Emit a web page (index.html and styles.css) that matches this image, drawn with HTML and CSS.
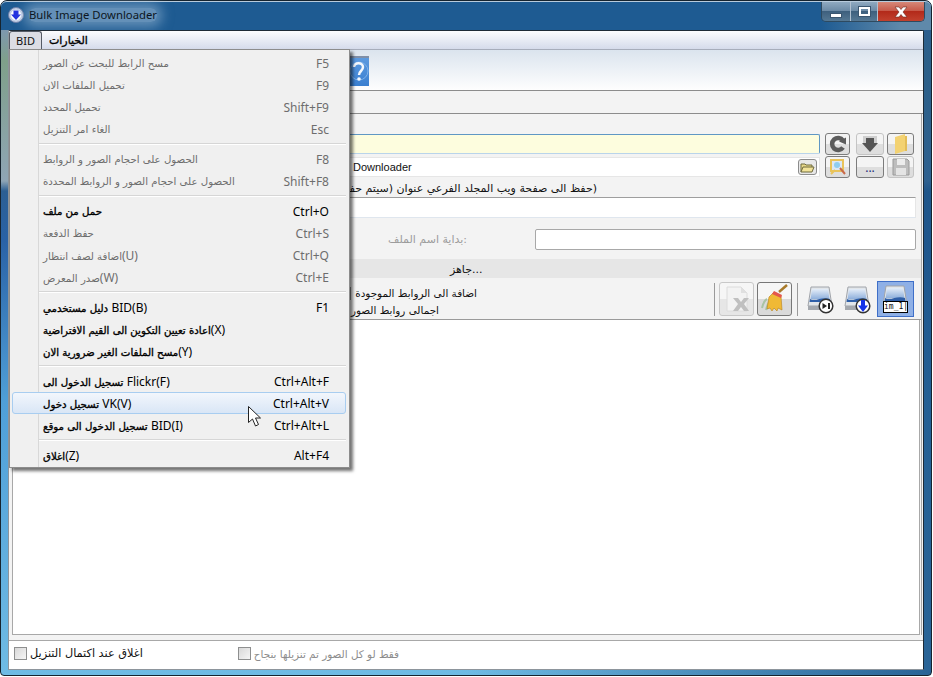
FILE: index.html
```html
<!DOCTYPE html>
<html>
<head>
  <meta charset='utf8'>
  <title>Bulk Image Downloader</title>
  <link rel="stylesheet" href="styles.css">
</head>
<body>
  <div class='window'>
    <div class='titlebar'>
      <svg class='appicon' width='16' height='16' viewBox='0 0 16 16'>
        <circle cx='8' cy='8' r='7.5' fill='#c3cfe6' stroke='#6d7fa8'/>
        <circle cx='8' cy='8' r='5.2' fill='#fff'/>
        <path d='M5.5 3.5h5v4h2.5L8 13 3 7.5h2.5z' fill='#2230e0'/>
      </svg>
      <span class='apptitle'>Bulk Image Downloader</span>
      <div class='caption'>
        <span class='capbtn'><i class='cap-min'></i></span>
        <span class='capbtn narrow'><i class='cap-max'></i></span>
        <span class='capbtn close'>
          <svg width='16' height='12' viewBox='0 0 16 12'><path d='M2 1h4l2 2.500L10 1h4l-4 5 4 5h-4L8 8.500 6 11H2l4-5z' fill='#fff' stroke='#6b2a20' stroke-width='.6'/></svg>
        </span>
      </div>
    </div>

    <div class='client'>
      <div class='menubar'>
        <span class='menutop open'>BID</span>
        <span class='menutop ar'>الخيارات</span>
      </div>

      <div class='toolbar'>
        <svg class='help' width='24' height='30' viewBox='0 0 24 30'>
          <defs>
            <linearGradient id='bookblue' x1='0' y1='0' x2='0' y2='1'>
              <stop offset='0' stop-color='#5f9ce0'/>
              <stop offset='1' stop-color='#3a7fd0'/>
            </linearGradient>
          </defs>
          <rect width='24' height='30' fill='url(#bookblue)'/>
          <rect width='24' height='2' fill='#7f8fa8'/>
          <circle cx='14' cy='15' r='9' fill='none' stroke='#7fb2ea' stroke-width='1'/>
          <path d='M9 11c0-5 9-5 9 0 0 4-4 4-4 8' fill='none' stroke='#f4f8fd' stroke-width='2.500'/>
          <circle cx='14' cy='23' r='1.800' fill='#f4f8fd'/>
        </svg>
      </div>
      <div class='tabs'></div>

      <div class='group'>
        <div class='row first'>
          <div class='input url'></div>
          <div class='btns'>
            <span class='btn b1 hot'>
              <svg width='20' height='18' viewBox='0 0 20 18'><path d='M15 5.500A6 6 0 1 0 15 12.500' fill='none' stroke='#5c5c5c' stroke-width='4.500'/><path d='M11 6.500l7-4v7z' fill='#5c5c5c'/></svg>
            </span>
            <span class='btn b2'>
              <svg width='20' height='18' viewBox='0 0 20 18'><rect x='3' y='1' width='14' height='8' fill='#cfcfcf'/><path d='M6 3h8v5h4l-8 9-8-9h4z' fill='#555'/></svg>
            </span>
            <span class='btn b3 hot'>
              <svg width='16' height='20' viewBox='0 0 16 20'><path d='M2 3l10-3v17L2 20z' fill='#f3d272'/><path d='M12 2h2v15h-2z' fill='#e3bd58'/></svg>
            </span>
          </div>
        </div>
        <div class='row second'>
          <div class='input path'>
            <span class='pathtext'>Downloader</span>
            <span class='browse'>
              <svg width='15' height='11' viewBox='0 0 15 11'><path d='M1 10V2h4l1 1h6v2' fill='#e8d98a' stroke='#6f6a3c'/><path d='M1 10l2-5h11l-2 5z' fill='#f2e39a' stroke='#6f6a3c'/></svg>
            </span>
          </div>
          <div class='btns'>
            <span class='btn b1 hot'>
              <svg width='20' height='18' viewBox='0 0 20 18'><rect x='3' y='2' width='12' height='11' fill='#dce8f5' stroke='#e9c35a' stroke-width='2'/><circle cx='9' cy='7' r='3' fill='#8fcdf0'/><path d='M12 10l5 6' stroke='#c96a4a' stroke-width='2'/><path d='M3 16l4-4' stroke='#e9c35a' stroke-width='2'/></svg>
            </span>
            <span class='btn b2 hot dots'>...</span>
            <span class='btn b3'>
              <svg width='18' height='18' viewBox='0 0 18 18'><path d='M1 1h14l2 2v14H1z' fill='#bdbdbd' stroke='#9a9a9a'/><rect x='5' y='1' width='8' height='6' fill='#ececec'/><rect x='4' y='10' width='10' height='7' fill='#e4e4e4'/></svg>
            </span>
          </div>
        </div>

        <div class='savetext ar' dir='rtl'>(حفظ الى صفحة ويب المجلد الفرعي عنوان (سيتم حف</div>
        <div class='input subdir'></div>
        <div class='prefix'>
          <span class='prefixlabel ar'>بداية اسم الملف:</span>
          <div class='input prefixbox'></div>
        </div>
        <div class='status'><span class='ar'>جاهز...</span></div>

        <div class='tools'>
          <div class='info ar' dir='rtl'>
            <div class='infoline'>اضافة الى الروابط الموجودة<i class='check'></i></div>
            <div class='infoline total'>اجمالى روابط الصور</div>
          </div>
          <i class='sep'></i>
          <span class='tool framed'>
            <svg width='30' height='30' viewBox='0 0 30 30'>
              <path d='M5 3h14l6 6v18H5z' fill='#f3f3f3' stroke='#dcdcdc'/>
              <path d='M19 3v6h6z' fill='#e0e0e0'/>
              <path d='M11 14h5l3 4 3-4h5l-5 6 5 7h-5l-3-4-3 4h-5l5-7z' fill='#c0c0c0'/>
            </svg>
          </span>
          <span class='tool framed dark'>
            <svg width='30' height='30' viewBox='0 0 30 30'>
              <path d='M2 24c1-4 3-8 5-9M6 26c1-4 2-7 4-9' stroke='#a9c4a4' stroke-width='2' fill='none'/>
              <path d='M9 13l5-5 7 4 1 14-4-2-1 3-3-3-2 3-2-3-3 1z' fill='#f0b935' stroke='#b98118' stroke-width='.6'/>
              <path d='M12 10l9 4 1-3-8-4z' fill='#e4574c'/>
              <path d='M19 8l8-7' stroke='#a87a2a' stroke-width='2.500'/>
            </svg>
          </span>
          <i class='sep wide'></i>
          <span class='tool plain'>
            <svg width='30' height='30' viewBox='0 0 30 30'>
              <use href='#disk'/>
              <circle cx='20' cy='22' r='6.800' fill='#fff' stroke='#333' stroke-width='1.500'/>
              <path d='M16.500 19l4.500 3-4.500 3z' fill='#222'/><rect x='22' y='19' width='2' height='6' fill='#222'/>
            </svg>
          </span>
          <span class='tool plain last'>
            <svg width='30' height='30' viewBox='0 0 30 30'>
              <use href='#disk'/>
              <circle cx='20' cy='22' r='6.800' fill='#fff' stroke='#333' stroke-width='1.500'/>
              <path d='M18 16h4v5.500h3L20 28l-5-6.500h3z' fill='#1434e8'/>
            </svg>
          </span>
          <span class='tool selected'>
            <svg width='30' height='30' viewBox='0 0 30 30'><use href='#disk'/></svg>
            <span class='naming'>im_1|</span>
          </span>
        </div>

        <div class='list'></div>
      </div>

      <div class='bottom'>
        <label class='opt ar'><i class='check'></i>اغلاق عند اكتمال التنزيل</label>
        <label class='opt off ar'><i class='check'></i>فقط لو كل الصور تم تنزيلها بنجاح</label>
      </div>
    </div>

    <!-- the open BID menu, over everything else -->
    <div class='menu'>
      <div class='item off'><span class='ar'>مسح الرابط للبحث عن الصور</span><span class='key'>F5</span></div>
      <div class='item off'><span class='ar'>تحميل الملفات الان</span><span class='key'>F9</span></div>
      <div class='item off'><span class='ar'>تحميل المحدد</span><span class='key'>Shift+F9</span></div>
      <div class='item off'><span class='ar'>الغاء امر التنزيل</span><span class='key'>Esc</span></div>
      <hr>
      <div class='item off'><span class='ar'>الحصول على احجام الصور و الروابط</span><span class='key'>F8</span></div>
      <div class='item off'><span class='ar'>الحصول على احجام الصور و الروابط المحددة</span><span class='key'>Shift+F8</span></div>
      <hr>
      <div class='item'><span class='ar'>حمل من ملف</span><span class='key'>Ctrl+O</span></div>
      <div class='item off'><span class='ar'>حفظ الدفعة</span><span class='key'>Ctrl+S</span></div>
      <div class='item off'><span class='ar'>اضافة لصف انتظار<span class='lat'>(U)</span></span><span class='key'>Ctrl+Q</span></div>
      <div class='item off'><span class='ar'>صدر المعرض<span class='lat'>(W)</span></span><span class='key'>Ctrl+E</span></div>
      <hr>
      <div class='item'><span class='ar'>دليل مستخدمي <span class='lat'>BID(B)</span></span><span class='key'>F1</span></div>
      <div class='item'><span class='ar'>اعادة تعيين التكوين الى القيم الافتراضية<span class='lat'>(X)</span></span></div>
      <div class='item'><span class='ar'>مسح الملفات الغير ضرورية الان<span class='lat'>(Y)</span></span></div>
      <hr>
      <div class='item'><span class='ar'>تسجيل الدخول الى <span class='lat'>Flickr(F)</span></span><span class='key'>Ctrl+Alt+F</span></div>
      <div class='item hover'><span class='ar'>تسجيل دخول <span class='lat'>VK(V)</span></span><span class='key'>Ctrl+Alt+V</span></div>
      <div class='item'><span class='ar'>تسجيل الدخول الى موقع <span class='lat'>BID(I)</span></span><span class='key'>Ctrl+Alt+L</span></div>
      <hr>
      <div class='item'><span class='ar'>اغلاق<span class='lat'>(Z)</span></span><span class='key'>Alt+F4</span></div>
    </div>

    <svg class='pointer' width='14' height='21' viewBox='0 0 14 21'>
      <path d='M.5.5v16l4-3.500 3 7 3-1.500-3-6.500h5z' fill='#fff' stroke='#222'/>
    </svg>
  </div>

  <svg width='0' height='0' class='defs'>
    <defs>
      <linearGradient id='diskglass' x1='0' y1='0' x2='0' y2='1'>
        <stop offset='0' stop-color='#e4edf8'/>
        <stop offset='1' stop-color='#8fb0dc'/>
      </linearGradient>
      <g id='disk'>
        <path d='M5 3h18l3 19H2z' fill='#e2e6ea' stroke='#a0a4aa'/>
        <path d='M6 5h16l1.500 10h-19z' fill='url(#diskglass)'/>
        <path d='M4 15c6 3 12-3 20 0l.5 3h-21z' fill='#2f5fa8'/>
        <rect x='2' y='22' width='24' height='4' fill='#a4a8ae'/>
      </g>
    </defs>
  </svg>
</body>
</html>
```

FILE: styles.css
```css
html, body {
  margin: 0;
  padding: 0;
  height: 100%;
  overflow: hidden;
  background: #fff;
}
body {
  font: 12px "Noto Sans", "DejaVu Sans", sans-serif;
  color: #111;
}
.defs {
  position: absolute;
}
.window {
  position: relative;
  box-sizing: border-box;
  width: 932px;
  height: 676px;
  padding: 0 7px 5px;
  display: flex;
  flex-direction: column;
  border: 1px solid #16242f;
  border-radius: 7px 7px 4px 4px;
  background:
    linear-gradient(90deg, rgba(29, 84, 136, 0) 50%, rgba(29, 84, 136, .85) 100%),
    linear-gradient(#1e5b92 0, #7e98ae 30px, #7fa08a 60px, #8fa5b5 180px, #2c5f93 190px, #2a62a6 240px, #4f9fd8 400px, #6fbbe4 100%);
}
.ar {
  font-family: "DejaVu Sans", "Noto Sans", sans-serif;
  font-size: 11px;
}
.lat {
  font: 12px "Noto Sans", sans-serif;
  -webkit-text-stroke: 0;
}

/* title bar */
.titlebar {
  height: 29px;
  flex: none;
  box-sizing: border-box;
  display: flex;
  align-items: center;
  background: linear-gradient(90deg, #1e5b92 0, #1e5b92 820px, #5f89aa 900px);
  margin: 0 -7px;
  padding: 0 7px 2px;
  border-radius: 6px 6px 0 0;
  border-top: 1px solid #b8cbdc;
}
.apptitle {
  margin-left: 5px;
  font-size: 11.3px;
  line-height: 14px;
  color: #0c1622;
  background: rgba(170, 198, 222, .5);
  box-shadow: 0 0 12px 5px rgba(170, 198, 222, .5);
  border-radius: 6px;
}
.caption {
  margin-left: auto;
  margin-right: -1px;
  align-self: flex-start;
  display: flex;
  height: 19px;
  border: 1px solid #2e4a60;
  border-top: 0;
  border-radius: 0 0 5px 5px;
  overflow: hidden;
}
.capbtn {
  width: 28px;
  height: 19px;
  display: flex;
  align-items: center;
  justify-content: center;
  border-right: 1px solid #b0c0d0;
  background: linear-gradient(#8fa9c0 0, #6d8ba6 45%, #3e607e 50%, #557893 100%);
}
.capbtn.narrow {
  width: 26px;
}
.capbtn.close {
  width: 46px;
  border-right: 0;
  background: linear-gradient(#d68878 0, #c75b4b 45%, #b32a1a 50%, #c1412e 100%);
}
.cap-min {
  width: 10px;
  height: 3px;
  margin-top: 7px;
  background: #fff;
  border: 1px solid #3b5670;
}
.cap-max {
  width: 7px;
  height: 5px;
  background: transparent;
  border: 2px solid #fff;
  outline: 1px solid #3b5670;
}

/* client area */
.client {
  flex: 1;
  min-height: 0;
  display: flex;
  flex-direction: column;
  background: #f3f3f3;
  border: 1px solid #1d2a36;
  border-radius: 2px 2px 0 0;
  border-bottom-color: #8d959c;
  border-left-color: #8d959c;
}
.menubar {
  height: 18px;
  flex: none;
  display: flex;
  align-items: center;
  border-bottom: 1px solid #a7adbb;
  background: linear-gradient(#fbfcfe, #d5dbeb);
}
.menutop {
  padding: 0 6px;
  font-size: 11px;
  line-height: 17px;
}
.menutop.ar {
  -webkit-text-stroke: .35px #000;
  color: #000;
  padding: 0 3px;
  margin-left: 4px;
}
.menutop.open {
  background: #dcdde4;
  border: 1px solid #555b66;
  border-bottom: 0;
  border-radius: 3px 3px 0 0;
  height: 18px;
  margin-top: 1px;
}
.toolbar {
  height: 41px;
  flex: none;
  padding: 6px 0 0 336px;
  box-sizing: border-box;
  border-bottom: 1px solid #8c8c8c;
  background: linear-gradient(#dbe4ee, #fefefe);
}
.help {
  display: block;
}
.tabs {
  height: 22px;
  flex: none;
  border-bottom: 1px solid #8c8c8c;
}

/* main group box */
.group {
  flex: 1;
  min-height: 0;
  display: flex;
  flex-direction: column;
  margin: 0 1px 5px 2px;
  border-right: 1px solid #a8a8a8;
}
.row {
  display: flex;
  justify-content: flex-end;
  padding-right: 7px;
  flex: none;
}
.row.first {
  padding-top: 19px;
  height: 22px;
}
.row.second {
  margin-top: 1px;
  height: 22px;
}
.input {
  box-sizing: border-box;
  background: #fff;
}
.url {
  flex: 1;
  height: 20px;
  margin: 1px 5px 0 0;
  background: #fdfdde;
  border: 1px solid #5f97c4;
  border-bottom-color: #b9d4ea;
  border-radius: 2px;
}
.path {
  flex: 1;
  height: 20px;
  margin: 1px 5px 0 0;
  display: flex;
  align-items: center;
  justify-content: space-between;
  padding: 0 2px 0 341px;
  border: 1px solid #e6e6e6;
}
.pathtext {
  font: 11px "Liberation Sans", sans-serif;
}
.browse {
  width: 19px;
  height: 16px;
  display: flex;
  align-items: center;
  justify-content: center;
  box-sizing: border-box;
  border: 1px solid #8c8c8c;
  border-radius: 3px;
  background: #e8e8e8;
}
.btns {
  display: flex;
  flex: none;
  gap: 3px;
}
.btn {
  box-sizing: border-box;
  height: 22px;
  display: flex;
  align-items: center;
  justify-content: center;
  border: 1px solid #c4c4c4;
  border-radius: 3px;
  background: linear-gradient(#f4f4f4 50%, #dedede 50%);
}
.btn.hot {
  border-color: #7c7c7c;
}
.b1 {
  width: 25px;
  margin-right: 3px;
}
.b2 {
  width: 28px;
}
.b3 {
  width: 27px;
}
.dots {
  color: #1d2a7a;
  line-height: 20px;
  padding-top: 1px;
}
.savetext {
  flex: none;
  height: 19px;
  line-height: 21px;
  width: 245px;
  margin-left: 341px;
  white-space: nowrap;
}
.subdir {
  flex: none;
  height: 21px;
  margin-right: 5px;
  border-top: 1px solid #9e9e9e;
  border-bottom: 1px solid #dfe6ee;
  border-right: 1px solid #e6e6e6;
}
.prefix {
  flex: none;
  height: 21px;
  margin: 11px 5px 0 0;
  display: flex;
  align-items: center;
  justify-content: flex-end;
}
.prefixlabel {
  color: #9c9c9c;
  margin-right: 68px;
}
.prefixbox {
  width: 381px;
  height: 21px;
  border: 1px solid #a8a8a8;
  border-radius: 2px;
}
.status {
  flex: none;
  height: 19px;
  margin-top: 9px;
  background: #e6e6e6;
  line-height: 19px;
  padding-left: 439px;
}
.tools {
  flex: none;
  height: 42px;
  box-sizing: border-box;
  display: flex;
  align-items: center;
  padding: 1px 7px 0 0;
  border-bottom: 1px solid #9a9a9a;
}
.info {
  flex: none;
  width: 126px;
  margin-left: 340px;
  margin-right: auto;
  margin-top: 6px;
  white-space: nowrap;
}
.infoline {
  height: 17px;
  line-height: 17px;
  display: flex;
  align-items: center;
  font-size: 10.4px;
}
.infoline.total {
  padding-right: 38px;
}
.check {
  flex: none;
  display: block;
  box-sizing: border-box;
  width: 13px;
  height: 13px;
  margin-right: 4px;
  border: 1px solid #8e8f8f;
  background: linear-gradient(135deg, #d8d8d8, #f6f6f6);
}
.sep {
  width: 1px;
  height: 33px;
  margin-right: 4px;
  background: #9a9a9a;
}
.sep.wide {
  margin: 0 8px 0 5px;
}
.tool {
  flex: none;
  box-sizing: border-box;
  display: flex;
  align-items: center;
  justify-content: center;
  position: relative;
}
.framed {
  width: 35px;
  height: 34px;
  margin-right: 3px;
  border: 1px solid #c8c8c8;
  border-radius: 3px;
  background: linear-gradient(#f6f6f6 50%, #e6e6e6 50%);
}
.framed.dark {
  border-color: #777;
  margin-right: 0;
  background: linear-gradient(#f6f6f6 50%, #dadada 50%);
}
.plain {
  width: 30px;
  height: 32px;
  margin-right: 7px;
}
.plain.last {
  margin-right: 4px;
}
.selected {
  width: 37px;
  height: 36px;
  align-items: flex-start;
  padding-top: 1px;
  background: #8fb0e6;
  border: 1px solid #3f6fc8;
}
/* box that lies over the disk picture of the selected tool */
.naming {
  position: absolute;
  left: 5px;
  bottom: 3px;
  width: 25px;
  height: 12px;
  box-sizing: border-box;
  border: 1px solid #000;
  background: #fff;
  font: 8px/10px "DejaVu Sans Mono", monospace;
  text-align: center;
}
.list {
  flex: 1;
  min-height: 0;
  box-sizing: border-box;
  margin: 0 1px 0 1px;
  background: #fff;
  border: 1px solid #a8a8a8;
  border-top: 0;
}
.bottom {
  height: 29px;
  flex: none;
  box-sizing: border-box;
  display: flex;
  align-items: center;
  padding: 0 0 3px 5px;
  background: #fff;
  border-top: 1px solid #a8a8a8;
}
.opt {
  display: flex;
  align-items: center;
  font-size: 11.3px;
  margin-right: 95px;
}
.opt .check {
  margin-right: 3px;
}
.opt.off {
  color: #8c8c8c;
  font-size: 10.4px;
}

/* popup menu */
.menu {
  position: absolute;
  left: 8px;
  top: 48px;
  width: 341px;
  box-sizing: border-box;
  padding: 2px 3px 1px 2px;
  background: linear-gradient(90deg, #f0f0f0 28px, #d8d8d8 28px, #d8d8d8 29px, #f0f0f0 29px);
  border: 1px solid #8c8c8c;
  box-shadow: 3px 3px 3px rgba(0, 0, 0, .55);
}
.menu hr {
  height: 0;
  margin: 3px 0 3px 27px;
  border: 0;
  border-top: 1px solid #d6d6d6;
  border-bottom: 1px solid #fff;
}
.item {
  height: 22px;
  box-sizing: border-box;
  display: flex;
  align-items: center;
  justify-content: space-between;
  padding: 0 16px 0 30px;
  border: 1px solid transparent;
  border-radius: 3px;
  color: #000;
}
.item .ar {
  font-size: 10.2px;
  -webkit-text-stroke: .35px #000;
}
.item.off {
  color: #6d6d6d;
}
.item.off .ar {
  -webkit-text-stroke: 0;
}
.item.hover {
  background: linear-gradient(#f2f6fc, #d9e6f6);
  border-color: #a8cdf0;
}
.pointer {
  position: absolute;
  left: 247px;
  top: 405px;
}
```
